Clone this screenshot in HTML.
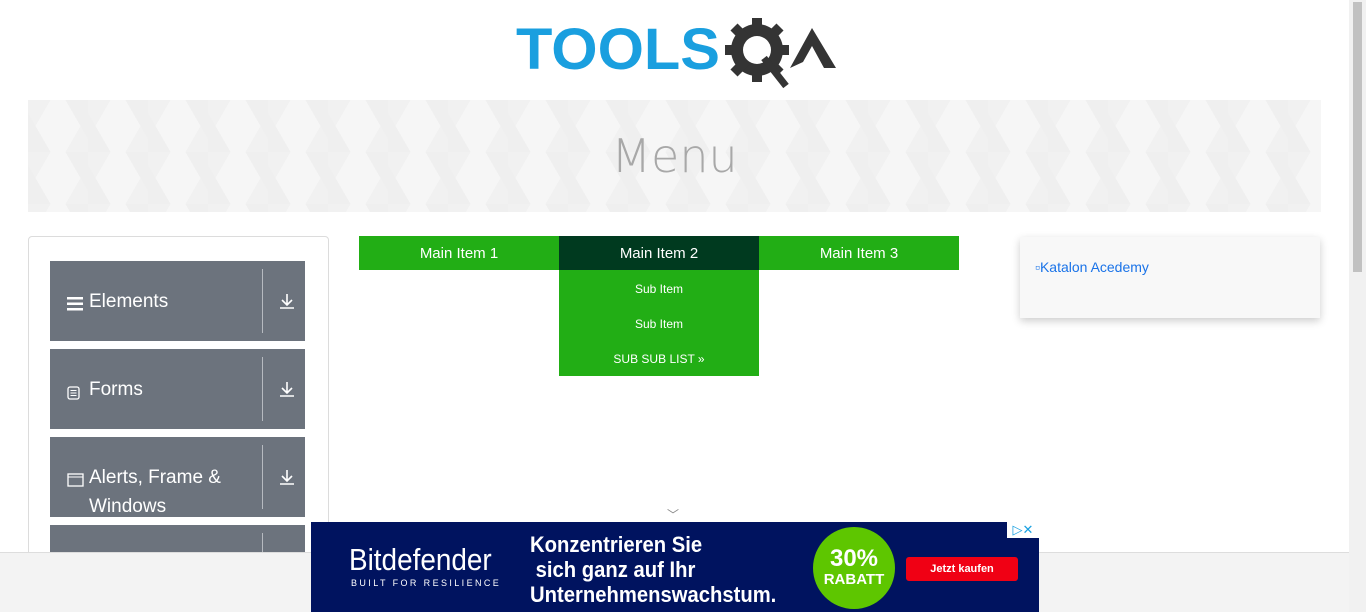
<!DOCTYPE html>
<html><head><style>
*{margin:0;padding:0;box-sizing:border-box}
html,body{width:1366px;height:612px;overflow:hidden}
body{background:#fff;font-family:"Liberation Sans",sans-serif;position:relative}
.sb{position:absolute;right:0;top:0;width:17px;height:612px;background:#f1f1f1;z-index:5}
.sb div{position:absolute;left:4px;top:2px;width:9px;height:270px;background:#c1c1c1}
.banner{position:absolute;left:28px;top:100px;width:1293px;height:112px;background:#f6f6f6;
background-image:linear-gradient(60deg,#efefef 25%,transparent 25%,transparent 75%,#efefef 75%),linear-gradient(-60deg,#f1f1f1 25%,transparent 25%,transparent 75%,#f1f1f1 75%);background-size:60px 52px}
.banner h1{font-size:46px;color:#a8a8a8;text-align:center;line-height:112px;font-family:"DejaVu Sans","Liberation Sans",sans-serif;font-weight:200}
.side{position:absolute;left:28px;top:236px;width:301px;height:330px;border:1px solid #dcdcdc;border-radius:4px;overflow:hidden}
.it{position:absolute;left:21px;width:255px;height:80px;background:#6c737d;color:#fff;font-size:19px}
.it .t{position:absolute;left:39px;top:26px;line-height:29px;width:180px}
.it .ic{position:absolute;left:17px}
.it .ln{position:absolute;left:212px;top:8px;width:1px;height:64px;background:#b6bac0}
.it .dl{position:absolute;left:229px;top:32px}
.nav{position:absolute;top:236px;height:34px;width:200px;background:#22ae15;color:#fff;font-size:15px;text-align:center;line-height:36px}
.sub{position:absolute;left:559px;top:270px;width:200px;height:106px;background:#22ae15;color:#fff;font-size:12px;text-align:center}
.sub div{height:35px;line-height:38px}
.kat{position:absolute;left:1020px;top:237px;width:300px;height:81px;background:#f8f8f8;box-shadow:0 3px 8px rgba(0,0,0,.2);font-size:14px;color:#1a73e8;padding:22px 15px}
.bot{position:absolute;left:0;top:552px;width:1349px;height:60px;background:#f3f3f3;border-top:1px solid #ddd;z-index:2}
.ad{position:absolute;left:311px;top:522px;width:728px;height:90px;background:#00135f;color:#fff;z-index:3}
</style></head><body>
<svg style="position:absolute;left:514px;top:16px" width="326" height="76" viewBox="0 0 326 76">
<text x="2" y="52" font-family="Liberation Sans" font-weight="bold" font-size="50" fill="#1a9fdf" textLength="204" lengthAdjust="spacingAndGlyphs" transform="translate(0,-8) scale(1,1.17)">TOOLS</text>
<g fill="#343434"><circle cx="243" cy="34" r="26"/>
<g stroke="#343434" stroke-width="10"><line x1="243" y1="2" x2="243" y2="66"/><line x1="211" y1="34" x2="275" y2="34"/><line x1="220" y1="11" x2="266" y2="57"/><line x1="266" y1="11" x2="220" y2="57"/></g>
<circle cx="243" cy="34" r="14" fill="#fff"/>
<line x1="250" y1="42" x2="272" y2="70" stroke="#343434" stroke-width="7"/>
<path d="M276 52 L298 12 L322 52 L310 52 L298 30 L289 46 Z"/></g>
</svg>
<div class="banner"><h1>Menu</h1></div>
<div class="side">
<div class="it" style="top:24px"><span class="ic" style="top:34px"><svg width="16" height="14"><rect y="0" width="16" height="2.5" fill="#fff"/><rect y="5.5" width="16" height="2.5" fill="#fff"/><rect y="11" width="16" height="2.5" fill="#fff"/></svg></span><span class="t">Elements</span><span class="ln"></span><span class="dl"><svg width="16" height="16"><path d="M8 1v11M3 7l5 5 5-5M1 15h14" stroke="#fff" stroke-width="1.6" fill="none"/></svg></span></div>
<div class="it" style="top:112px"><span class="ic" style="top:35px"><svg width="14" height="14"><rect x="1" y="1" width="11" height="12" rx="2" fill="none" stroke="#fff" stroke-width="1.3"/><path d="M3.5 4.5h6M3.5 7h6M3.5 9.5h6" stroke="#fff"/></svg></span><span class="t">Forms</span><span class="ln"></span><span class="dl"><svg width="16" height="16"><path d="M8 1v11M3 7l5 5 5-5M1 15h14" stroke="#fff" stroke-width="1.6" fill="none"/></svg></span></div>
<div class="it" style="top:200px"><span class="ic" style="top:34px"><svg width="17" height="14"><rect x="1" y="1" width="15" height="12" fill="none" stroke="#fff" stroke-width="1.3"/><path d="M1 4h15" stroke="#fff"/></svg></span><span class="t">Alerts, Frame &amp; Windows</span><span class="ln"></span><span class="dl"><svg width="16" height="16"><path d="M8 1v11M3 7l5 5 5-5M1 15h14" stroke="#fff" stroke-width="1.6" fill="none"/></svg></span></div>
<div class="it" style="top:288px"><span class="ln"></span></div>
</div>
<div class="nav" style="left:359px">Main Item 1</div>
<div class="nav" style="left:559px;background:#003a1f">Main Item 2</div>
<div class="nav" style="left:759px">Main Item 3</div>
<div class="sub"><div>Sub Item</div><div>Sub Item</div><div>SUB SUB LIST »</div></div>
<div class="kat">▫Katalon Acedemy</div>
<div class="bot"></div>
<div style="position:absolute;left:667px;top:506px;color:#888;font-size:12px">﹀</div>
<div class="ad">
<div style="position:absolute;left:38px;top:20px;font-size:31px;transform:scaleX(.9);transform-origin:left">Bitdefender</div>
<div style="position:absolute;left:40px;top:56px;font-size:9px;letter-spacing:2.4px">BUILT FOR RESILIENCE</div>
<div style="position:absolute;left:219px;top:10px;font-size:22px;font-weight:bold;line-height:25px;transform:scaleX(.92);transform-origin:left">Konzentrieren Sie<br>&nbsp;sich ganz auf Ihr<br>Unternehmenswachstum.</div>
<div style="position:absolute;left:502px;top:5px;width:82px;height:82px;border-radius:50%;background:#5ec600;text-align:center;font-weight:bold"><div style="font-size:24px;margin-top:20px;line-height:24px">30%</div><div style="font-size:15px">RABATT</div></div>
<div style="position:absolute;left:595px;top:35px;width:112px;height:24px;background:#f00014;border-radius:3px;font-size:11px;font-weight:bold;text-align:center;line-height:24px">Jetzt kaufen</div>
<div style="position:absolute;right:0;top:0;width:32px;height:16px;background:#fff;color:#19a0e0;font-size:13px;line-height:16px;text-align:center">▷✕</div>
</div>
<div class="sb"><div></div></div>
</body></html>
